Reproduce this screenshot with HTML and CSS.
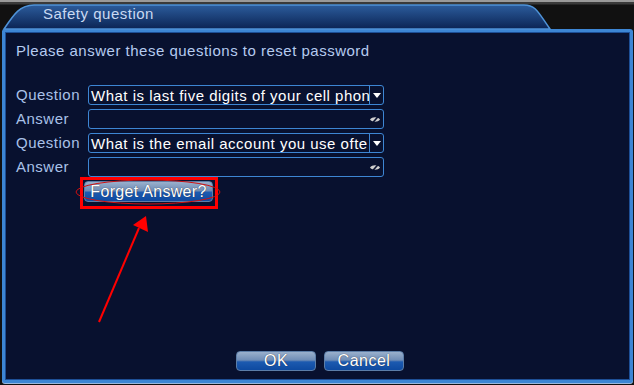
FILE: index.html
```html
<!DOCTYPE html>
<html>
<head>
<meta charset="utf-8">
<link rel="stylesheet" href="styles.css">
</head>
<body>
<div class="window">
  <div class="titlebar">
    <svg class="tab-shape" width="634" height="30" viewBox="0 0 634 30">
      <defs>
        <linearGradient id="tabg" x1="0" y1="0" x2="0" y2="1">
          <stop offset="0" stop-color="#2c5c9c"/>
          <stop offset="1" stop-color="#0b2454"/>
        </linearGradient>
      </defs>
      <path d="M4 29 C14 14 20 5 34 5 L524 5 C536 5 538 12 550 29 Z" fill="url(#tabg)" stroke="#4f93d8" stroke-width="1.5"/>
    </svg>
    <span class="title">Safety question</span>
  </div>
  <div class="panel">
    <p class="intro">Please answer these questions to reset password</p>
    <div class="form">
      <span class="label">Question</span>
      <div class="field select"><span class="val">What is last five digits of your cell phon</span><span class="drop"><svg width="8" height="5" viewBox="0 0 8 5"><path d="M0 0 H8 L4 5 Z" fill="#fff"/></svg></span></div>
      <span class="label">Answer</span>
      <div class="field input"><span class="val"></span><span class="eye"><svg width="12" height="9" viewBox="0 0 12 9"><path d="M1 4.5 C3 1.5 9 1.5 11 4.5 C9 7.5 3 7.5 1 4.5 Z" fill="#d0d0d0"/><path d="M3 8.5 L10 0.5" stroke="#08112f" stroke-width="1.6"/></svg></span></div>
      <span class="label">Question</span>
      <div class="field select"><span class="val">What is the email account you use ofte</span><span class="drop"><svg width="8" height="5" viewBox="0 0 8 5"><path d="M0 0 H8 L4 5 Z" fill="#fff"/></svg></span></div>
      <span class="label">Answer</span>
      <div class="field input"><span class="val"></span><span class="eye"><svg width="12" height="9" viewBox="0 0 12 9"><path d="M1 4.5 C3 1.5 9 1.5 11 4.5 C9 7.5 3 7.5 1 4.5 Z" fill="#d0d0d0"/><path d="M3 8.5 L10 0.5" stroke="#08112f" stroke-width="1.6"/></svg></span></div>
    </div>
    <div class="forget-row"><button class="btn forget">Forget Answer?</button></div>
    <div class="actions">
      <button class="btn action">OK</button>
      <button class="btn action">Cancel</button>
    </div>
  </div>
  <svg class="annot" width="634" height="385" viewBox="0 0 634 385">
    <rect x="81.5" y="178.5" width="135" height="29" fill="none" stroke="#ff0000" stroke-width="3"/>
    <ellipse cx="148" cy="192" rx="72" ry="12" fill="none" stroke="#d01010" stroke-width="1"/>
    <line x1="99" y1="322" x2="139" y2="228" stroke="#ff0000" stroke-width="2"/>
    <path d="M146 216 L148 232 L133 225 Z" fill="#ff0000"/>
  </svg>
</div>
</body>
</html>
```
FILE: styles.css
```css
html, body {
  margin: 0;
  padding: 0;
  background: #141414;
}
body {
  font-family: "Liberation Sans", Arial, sans-serif;
}
.window {
  position: relative;
  width: 634px;
  height: 385px;
  overflow: hidden;
  background: linear-gradient(#9a9a9a 0, #9a9a9a 2px, #3a3a3a 2px, #3a3a3a 4px, #111 5px, #111 100%);
}
.titlebar {
  position: relative;
  height: 29px;
}
.tab-shape {
  position: absolute;
  left: 0;
  top: 0;
}
.title {
  position: relative;
  display: block;
  padding: 5px 0 0 43px;
  font-size: 15px;
  letter-spacing: 0.5px;
  line-height: 17px;
  color: #c9d9f2;
}
.panel {
  box-sizing: border-box;
  margin: 0 1px 0 2px;
  height: 354px;
  border: 3px solid #3d86d4;
  border-radius: 3px;
  box-shadow: inset 0 0 0 1px #1d4f96, 0 1px 0 #9ab8dc;
  background: #08112f;
  padding: 11px 0 0 11px;
  display: flex;
  flex-direction: column;
}
.intro {
  margin: 0;
  font-size: 15px;
  letter-spacing: 0.5px;
  line-height: 16px;
  color: #b5cbef;
}
.form {
  margin-top: 26px;
  display: grid;
  grid-template-columns: 72px 296px;
  grid-auto-rows: 20px;
  row-gap: 4px;
  align-items: center;
}
.label {
  font-size: 15px;
  letter-spacing: 0.5px;
  color: #a9c1e8;
  line-height: 20px;
}
.field {
  box-sizing: border-box;
  height: 20px;
  border: 1px solid #3d86d4;
  border-radius: 3px;
  display: flex;
  align-items: center;
  overflow: hidden;
}
.val {
  flex: 1;
  min-width: 0;
  white-space: nowrap;
  overflow: hidden;
  color: #fff;
  font-size: 15px;
  letter-spacing: 0.5px;
  padding-left: 2px;
}
.drop {
  width: 13px;
  height: 100%;
  border-left: 1px solid #3d86d4;
  display: flex;
  align-items: center;
  justify-content: center;
}
.eye {
  width: 14px;
  display: flex;
  align-items: center;
  justify-content: center;
  padding-right: 1px;
}
.btn {
  font-family: "Liberation Sans", Arial, sans-serif;
  color: #fff;
  font-size: 15px;
  letter-spacing: 0.5px;
  border: 1px solid #5c7ea8;
  border-radius: 4px;
  padding: 0;
  background: linear-gradient(#9ab0cc 0, #6f8db6 45%, #1c5ab0 55%, #0e4aa0 100%);
  text-shadow: 0 0 1px #223;
}
.forget-row {
  margin-top: 4px;
  padding-left: 68px;
  display: flex;
}
.forget {
  width: 129px;
  height: 21px;
  line-height: 18px;
  font-size: 16px;
  letter-spacing: 0.3px;
  white-space: nowrap;
}
.actions {
  margin-top: auto;
  margin-bottom: 9px;
  display: flex;
  gap: 8px;
  padding-left: 220px;
}
.action {
  width: 80px;
  height: 20px;
  line-height: 18px;
  font-size: 16px;
}
.annot {
  position: absolute;
  left: 0;
  top: 0;
  pointer-events: none;
}
```
